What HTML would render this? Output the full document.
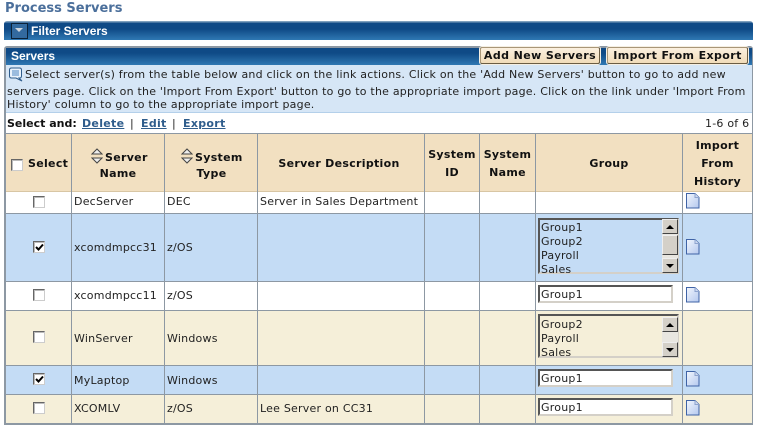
<!DOCTYPE html>
<html><head><meta charset="utf-8">
<style>
html,body{margin:0;padding:0;background:#fff;}
#p{position:relative;width:758px;height:429px;overflow:hidden;font:11px/14px "DejaVu Sans","Liberation Sans",sans-serif;color:#222;letter-spacing:.22px;}
#p div,#p span.a{position:absolute;white-space:nowrap;}
.b{font-weight:bold;color:#111;letter-spacing:.3px;}
.c{text-align:center;}
.l{color:#2f5d8c;font-weight:bold;text-decoration:underline;letter-spacing:.3px;}
.cb{width:10px;height:10px;border:1px solid;border-color:#666 #ccc #ccc #666;background:#fff;box-shadow:inset 1px 1px 0 #bbb;}
.inp{width:130px;height:14px;border:2px solid;border-color:#555 #d4d0c8 #d4d0c8 #555;background:#fff;line-height:16px;padding-left:1px;}
.lst{border:2px solid;border-color:#555 #d4d0c8 #d4d0c8 #555;overflow:hidden;}
.sb{width:16px;height:16px;background:#d4d0c8;border:1px solid;border-color:#eee #444 #444 #eee;box-sizing:border-box;}
.v{top:134px;width:1px;height:289px;background:#8d98a3;}
.h{left:6px;width:746px;height:1px;background:#8d98a3;}
.btn{height:15px;top:47px;line-height:15px;text-align:center;font-weight:bold;color:#111;letter-spacing:.4px;background:linear-gradient(#fbf0df,#f1dcb9);border:1px solid #a99677;border-right-color:#6b5d44;border-bottom-color:#6b5d44;border-radius:2px;box-shadow:0 0 0 1px #f5efe3;}
.t{font-family:"Liberation Sans",sans-serif;font-size:12px;font-weight:bold;color:#fff;letter-spacing:0;}
</style></head><body><div id="p">

<div style="left:5px;top:1px;font-size:13px;line-height:16px;font-weight:bold;color:#4b6f9b;letter-spacing:0;">Process Servers</div>

<div style="left:4px;top:21px;width:749px;height:19px;background:linear-gradient(#7fa0bd 0,#7fa0bd 1px,#0f4a86 2px,#0f4a86 8px,#2f78b3 100%);border-radius:3px 3px 0 0;"></div>
<div style="left:11px;top:23px;width:15px;height:14px;background:#336a9f;border:1px solid #0b2238;"></div>
<svg style="position:absolute;left:14px;top:28px" width="11" height="6"><path d="M1 0H9L5 4Z" fill="#cfd6dd"/></svg>
<div class="t" style="left:31px;top:24px;">Filter Servers</div>

<div style="left:4px;top:46px;width:749px;height:379px;background:#8d98a3;border-radius:3px 3px 0 0;"></div>
<div style="left:6px;top:48px;width:746px;height:17px;background:linear-gradient(#0f4a86 0,#0f4a86 30%,#2f78b3 100%);"></div>
<div class="t" style="left:11px;top:49px;">Servers</div>

<div class="btn" style="left:480px;width:118px;">Add New Servers</div>
<div class="btn" style="left:607px;width:139px;">Import From Export</div>

<div style="left:6px;top:65px;width:746px;height:47px;background:#d6e6f6;"></div>
<div style="left:6px;top:112px;width:746px;height:1px;background:#b4d0ea;"></div>
<svg style="position:absolute;left:9px;top:67px" width="14" height="15" viewBox="0 0 14 15"><path d="M2.5 1H10.500Q12.500 1 12.500 3V9Q12.500 11 10.500 11H10L13 14L7 11H2.500Q.5 11 .5 9V3Q.5 1 2.500 1Z" fill="#e9f2fb" stroke="#2f5d8c"/><path d="M3 4H10M3 6H10M3 8H10" stroke="#4d87c2"/></svg>
<div style="left:25px;top:68px;">Select server(s) from the table below and click on the link actions. Click on the 'Add New Servers' button to go to add new</div>
<div style="left:7px;top:85px;">servers page. Click on the 'Import From Export' button to go to the appropriate import page. Click on the link under 'Import From</div>
<div style="left:7px;top:98px;">History' column to go to the appropriate import page.</div>

<div style="left:6px;top:113px;width:746px;height:20px;background:#fff;"></div>
<div class="b" style="left:7px;top:117px;letter-spacing:0;">Select and:</div>
<div class="l" style="left:82px;top:117px;">Delete</div>
<div style="left:130px;top:117px;">|</div>
<div class="l" style="left:141px;top:117px;">Edit</div>
<div style="left:172px;top:117px;">|</div>
<div class="l" style="left:183px;top:117px;">Export</div>
<div style="left:705px;top:117px;">1-6 of 6</div>

<!-- backgrounds -->
<div style="left:6px;top:134px;width:746px;height:57px;background:#f2e0c1;"></div>
<div style="left:6px;top:191px;width:746px;height:1px;background:#d8c6a4;"></div>
<div style="left:6px;top:192px;width:746px;height:21px;background:#fff;"></div>
<div style="left:6px;top:213px;width:746px;height:68px;background:#c4dcf5;"></div>
<div style="left:6px;top:281px;width:746px;height:30px;background:#fff;"></div>
<div style="left:6px;top:311px;width:746px;height:54px;background:#f5efd9;"></div>
<div style="left:6px;top:365px;width:746px;height:29px;background:#c4dcf5;"></div>
<div style="left:6px;top:394px;width:746px;height:29px;background:#f5efd9;"></div>

<div class="h" style="top:213px"></div>
<div class="h" style="top:281px"></div>
<div class="h" style="top:310px"></div>
<div class="h" style="top:365px"></div>
<div class="h" style="top:394px"></div>
<div class="v" style="left:71px"></div>
<div class="v" style="left:164px"></div>
<div class="v" style="left:257px"></div>
<div class="v" style="left:424px"></div>
<div class="v" style="left:479px"></div>
<div class="v" style="left:535px"></div>
<div class="v" style="left:682px"></div>

<!-- header -->
<div class="cb" style="left:11px;top:159px;"></div>
<div class="b" style="left:28px;top:157px;">Select</div>
<svg style="position:absolute;left:91px;top:148px" width="12" height="16"><path d="M1 6L6 1L11 6Z" fill="#eee" stroke="#444"/><path d="M1 10L6 15L11 10Z" fill="#eee" stroke="#444"/></svg>
<div class="b" style="left:105px;top:151px;">Server</div>
<div class="b c" style="left:72px;top:167px;width:92px;">Name</div>
<svg style="position:absolute;left:181px;top:148px" width="12" height="16"><path d="M1 6L6 1L11 6Z" fill="#eee" stroke="#444"/><path d="M1 10L6 15L11 10Z" fill="#eee" stroke="#444"/></svg>
<div class="b" style="left:195px;top:151px;">System</div>
<div class="b c" style="left:166px;top:167px;width:91px;">Type</div>
<div class="b c" style="left:256px;top:157px;width:166px;">Server Description</div>
<div class="b c" style="left:425px;top:148px;width:54px;">System</div>
<div class="b c" style="left:425px;top:166px;width:54px;">ID</div>
<div class="b c" style="left:480px;top:148px;width:55px;">System</div>
<div class="b c" style="left:480px;top:166px;width:55px;">Name</div>
<div class="b c" style="left:536px;top:157px;width:146px;">Group</div>
<div class="b c" style="left:683px;top:139px;width:69px;">Import</div>
<div class="b c" style="left:683px;top:157px;width:69px;">From</div>
<div class="b c" style="left:683px;top:175px;width:69px;">History</div>

<!-- rows -->
<div class="cb" style="left:33px;top:196px;"></div>
<div style="left:74px;top:195px;">DecServer</div><div style="left:167px;top:195px;">DEC</div>
<div style="left:260px;top:195px;">Server in Sales Department</div>

<div class="cb" style="left:33px;top:241px;"></div>
<svg style="position:absolute;left:35px;top:243px" width="9" height="9"><path d="M1 4L3.500 6.500L8 1.500" fill="none" stroke="#000" stroke-width="2"/></svg>
<div style="left:74px;top:241px;">xcomdmpcc31</div><div style="left:167px;top:241px;">z/OS</div>

<div class="cb" style="left:33px;top:289px;"></div>
<div style="left:74px;top:289px;">xcomdmpcc11</div><div style="left:167px;top:289px;">z/OS</div>

<div class="cb" style="left:33px;top:331px;"></div>
<div style="left:74px;top:332px;">WinServer</div><div style="left:167px;top:332px;">Windows</div>

<div class="cb" style="left:33px;top:373px;"></div>
<svg style="position:absolute;left:35px;top:375px" width="9" height="9"><path d="M1 4L3.500 6.500L8 1.500" fill="none" stroke="#000" stroke-width="2"/></svg>
<div style="left:74px;top:374px;">MyLaptop</div><div style="left:167px;top:374px;">Windows</div>

<div class="cb" style="left:33px;top:402px;"></div>
<div style="left:74px;top:402px;">XCOMLV</div><div style="left:167px;top:402px;">z/OS</div>
<div style="left:260px;top:402px;">Lee Server on CC31</div>

<!-- list 1 -->
<div class="lst" style="left:538px;top:218px;width:137px;height:52px;"></div>
<div style="left:541px;top:221px;">Group1</div>
<div style="left:541px;top:235px;">Group2</div>
<div style="left:541px;top:249px;">Payroll</div>
<div style="left:541px;top:263px;height:10px;overflow:hidden;">Sales</div>
<div style="left:662px;top:219px;width:16px;height:54px;background:#e8e6e0;"></div>
<div class="sb" style="left:662px;top:219px;height:15px;"></div>
<div class="sb" style="left:662px;top:235px;height:20px;"></div>
<div class="sb" style="left:662px;top:258px;height:15px;"></div>
<svg style="position:absolute;left:662px;top:219px" width="16" height="16"><path d="M4 10H12L8 6Z"/></svg>
<svg style="position:absolute;left:662px;top:258px" width="16" height="16"><path d="M4 6H12L8 10Z"/></svg>

<div class="inp" style="left:538px;top:285px;">Group1</div>

<!-- list 2 -->
<div class="lst" style="left:538px;top:314px;width:137px;height:40px;"></div>
<div style="left:541px;top:318px;">Group2</div>
<div style="left:541px;top:332px;">Payroll</div>
<div style="left:541px;top:346px;height:10px;overflow:hidden;">Sales</div>
<div style="left:662px;top:317px;width:16px;height:40px;background:#e8e6e0;"></div>
<div class="sb" style="left:662px;top:317px;height:15px;"></div>
<div class="sb" style="left:662px;top:342px;height:15px;"></div>
<svg style="position:absolute;left:662px;top:317px" width="16" height="16"><path d="M4 10H12L8 6Z"/></svg>
<svg style="position:absolute;left:662px;top:342px" width="16" height="16"><path d="M4 6H12L8 10Z"/></svg>

<div class="inp" style="left:538px;top:369px;">Group1</div>
<div class="inp" style="left:538px;top:398px;">Group1</div>

<!-- doc icons -->
<svg style="position:absolute;left:686px;top:193px" width="14" height="16"><defs><linearGradient id="g" x1="0" y1="0" x2="1" y2="1"><stop offset="0" stop-color="#f2f6fd"/><stop offset="1" stop-color="#b4c8ee"/></linearGradient></defs><path d="M.5.5H9L13 4.500V15H.5Z" fill="url(#g)" stroke="#3f63a6"/><path d="M9 .5V4.500H13" fill="#cfdaf0" stroke="#8ea4cf"/></svg>
<svg style="position:absolute;left:686px;top:239px" width="14" height="16"><path d="M.5.5H9L13 4.500V15H.5Z" fill="url(#g)" stroke="#3f63a6"/><path d="M9 .5V4.500H13" fill="#cfdaf0" stroke="#8ea4cf"/></svg>
<svg style="position:absolute;left:686px;top:287px" width="14" height="16"><path d="M.5.5H9L13 4.500V15H.5Z" fill="url(#g)" stroke="#3f63a6"/><path d="M9 .5V4.500H13" fill="#cfdaf0" stroke="#8ea4cf"/></svg>
<svg style="position:absolute;left:686px;top:371px" width="14" height="16"><path d="M.5.5H9L13 4.500V15H.5Z" fill="url(#g)" stroke="#3f63a6"/><path d="M9 .5V4.500H13" fill="#cfdaf0" stroke="#8ea4cf"/></svg>
<svg style="position:absolute;left:686px;top:400px" width="14" height="16"><path d="M.5.5H9L13 4.500V15H.5Z" fill="url(#g)" stroke="#3f63a6"/><path d="M9 .5V4.500H13" fill="#cfdaf0" stroke="#8ea4cf"/></svg>

</div></body></html>
